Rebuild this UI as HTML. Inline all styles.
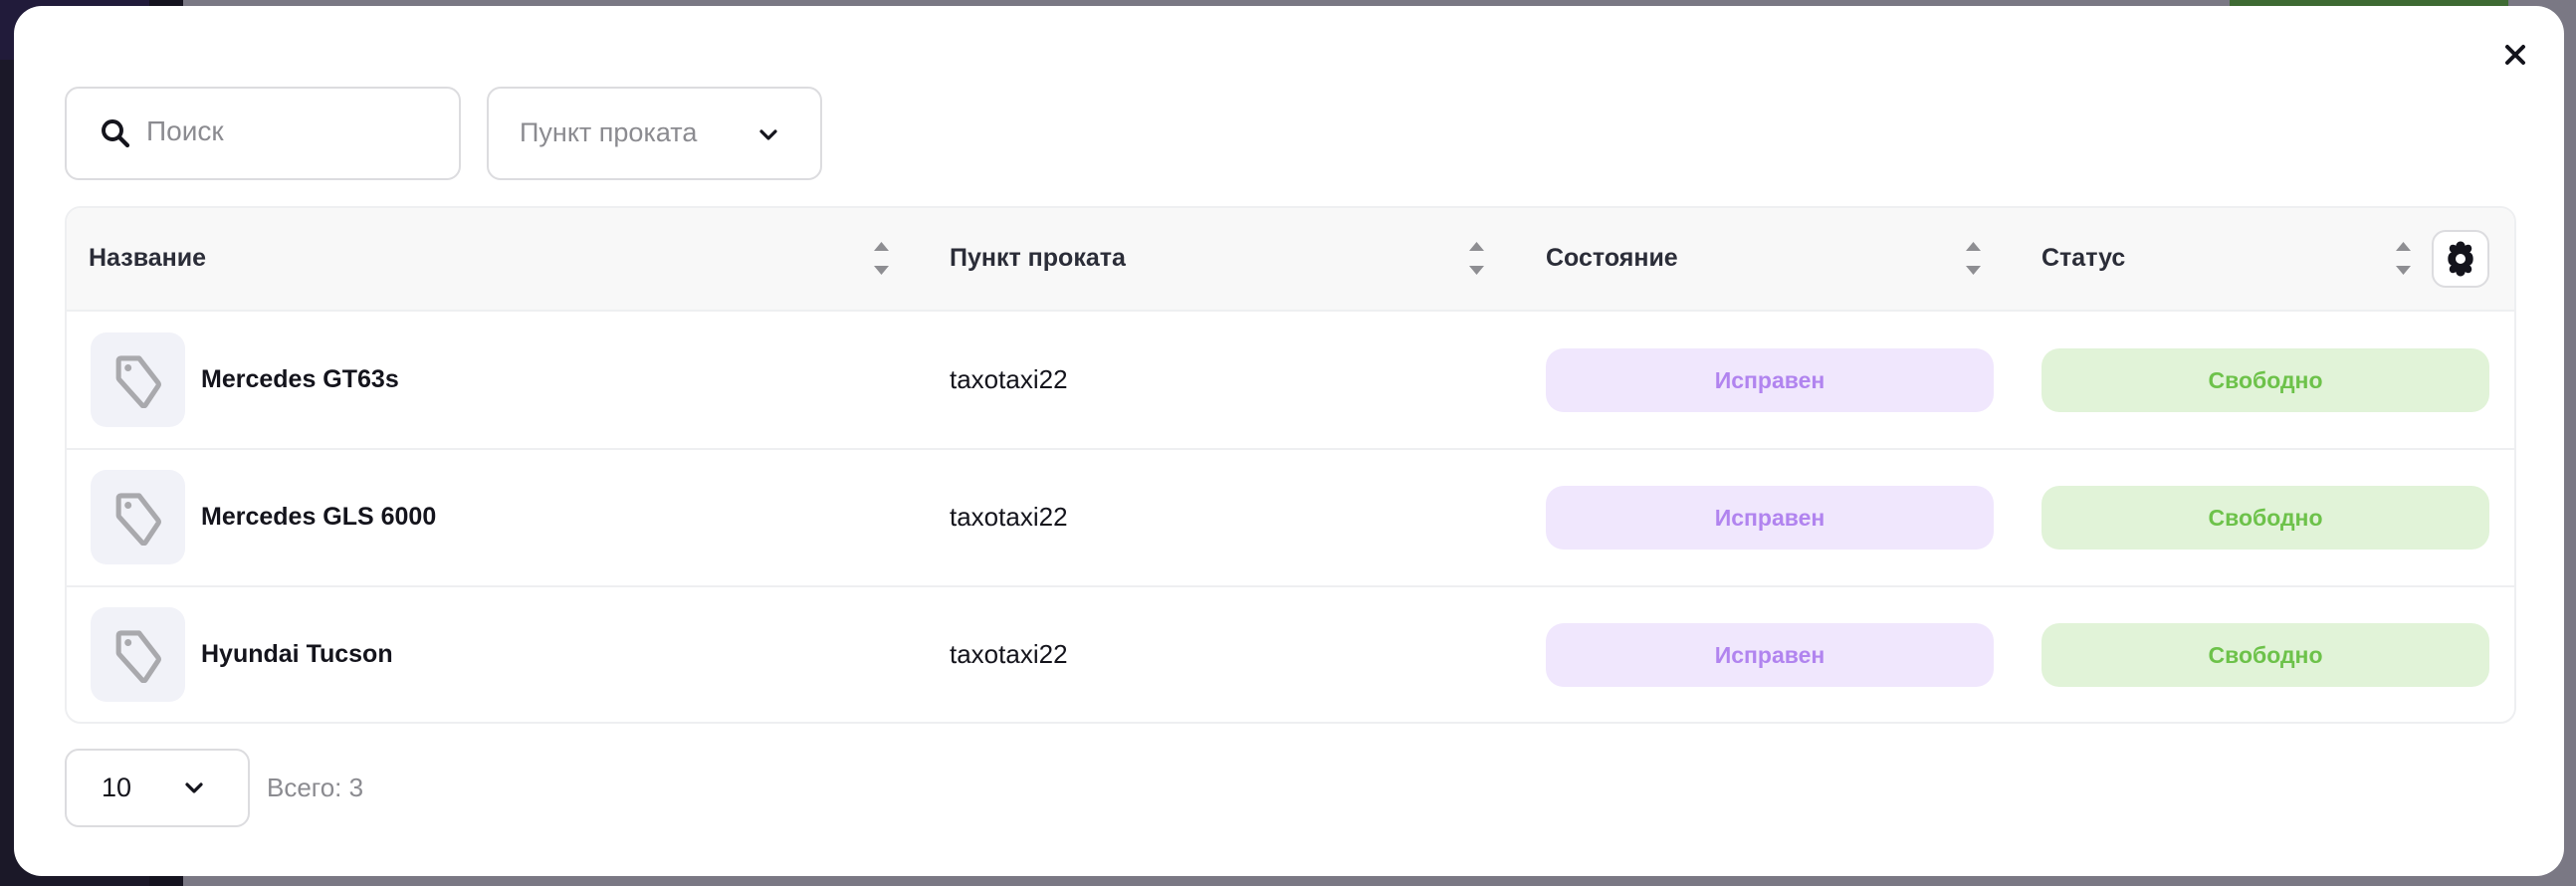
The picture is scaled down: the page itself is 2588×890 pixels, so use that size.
<!DOCTYPE html>
<html><head><meta charset="utf-8"><style>
*{box-sizing:border-box;margin:0;padding:0}
body{width:2588px;height:890px;position:relative;overflow:hidden;background:#7a7884;font-family:"Liberation Sans",sans-serif}
.a{position:absolute}
.modal{left:14px;top:6px;width:2562px;height:874px;background:#fff;border-radius:28px}
.box{border:2px solid #dcdcdf;border-radius:14px;background:#fff}
.hd{font-size:25px;color:#2b2d38;font-weight:bold}
.tx{font-size:26px;color:#14141c}
.nm{font-weight:bold;font-size:25px}
.pill{border-radius:18px;height:64px;display:flex;align-items:center;justify-content:center;font-size:23px;font-weight:bold}
.p1{background:#f0e7fd;color:#b184ef}
.p2{background:#e1f3d8;color:#6dc24a}
.icon{width:95px;height:95px;background:#f1f2f8;border-radius:16px}
.line{height:2px;background:#eeeff1;left:66px;width:2461px}
</style></head><body>
<div class="a" style="left:0;top:0;width:150px;height:890px;background:#1b1828"></div>
<div class="a" style="left:0;top:0;width:150px;height:60px;background:#211b3a"></div>
<div class="a" style="left:150px;top:0;width:34px;height:890px;background:#15131f"></div>
<div class="a" style="left:2240px;top:0;width:280px;height:8px;background:#3e6a33"></div>
<div class="a modal"></div>
<svg class="a" style="left:2515px;top:43px" width="24" height="24" viewBox="0 0 24 24"><path d="M4 4L20 20M20 4L4 20" stroke="#14141c" stroke-width="4" stroke-linecap="round"/></svg>

<div class="a box" style="left:65px;top:87px;width:398px;height:94px"></div>
<svg class="a" style="left:98px;top:116px" width="36" height="36" viewBox="0 0 24 24"><circle cx="10" cy="10" r="6" fill="none" stroke="#14141c" stroke-width="2.6"/><path d="M14.5 14.5L20 20" stroke="#14141c" stroke-width="2.8" stroke-linecap="round"/></svg>
<div class="a" style="left:147px;top:116px;font-size:28px;color:#8b8b90">Поиск</div>

<div class="a box" style="left:489px;top:87px;width:337px;height:94px"></div>
<div class="a" style="left:522px;top:118px;font-size:27px;color:#8b8b90">Пункт проката</div>
<svg class="a" style="left:760px;top:124px" width="24" height="24" viewBox="0 0 24 24"><path d="M5 8L12 15L19 8" fill="none" stroke="#14141c" stroke-width="3.2" stroke-linecap="round" stroke-linejoin="round"/></svg>

<div class="a" style="left:65px;top:207px;width:2463px;height:520px;border:2px solid #eeeff1;border-radius:16px;overflow:hidden">
 <div style="height:104px;background:#f8f8f8;border-bottom:2px solid #eeeff1"></div>
</div>
<div class="a line" style="top:450px"></div>
<div class="a line" style="top:588px"></div>

<div class="a hd" style="left:89px;top:245px">Название</div>
<div class="a hd" style="left:954px;top:245px">Пункт проката</div>
<div class="a hd" style="left:1553px;top:245px">Состояние</div>
<div class="a hd" style="left:2051px;top:245px">Статус</div>

<svg width="0" height="0" style="position:absolute"><defs><g id="s"><path d="M0 9L7.5 0L15 9Z" fill="#8e8e92"/><path d="M0 24L7.5 33L15 24Z" fill="#8e8e92"/></g></defs></svg>
<svg class="a" style="left:878px;top:243px" width="15" height="34"><use href="#s"/></svg>
<svg class="a" style="left:1476px;top:243px" width="15" height="34"><use href="#s"/></svg>
<svg class="a" style="left:1975px;top:243px" width="15" height="34"><use href="#s"/></svg>
<svg class="a" style="left:2407px;top:243px" width="15" height="34"><use href="#s"/></svg>

<div class="a box" style="left:2443px;top:231px;width:58px;height:58px;border-radius:14px"></div>
<svg class="a" style="left:2452px;top:240px" width="40" height="40" viewBox="0 0 24 24"><path fill="#14141c" fill-rule="evenodd" d="M12 1.5c1.6 0 2.6 1.3 2.8 2.6 1.1-.8 2.8-1 3.6.4.8 1.4.1 2.9-.9 3.6 1.2.5 2.1 1.6 2.1 3.9s-.9 3.4-2.1 3.9c1 .7 1.700 2.2.9 3.6-.8 1.4-2.5 1.2-3.6.4-.2 1.3-1.2 2.6-2.8 2.6s-2.6-1.3-2.8-2.6c-1.1.8-2.8 1-3.6-.4-.8-1.4-.1-2.9.9-3.6C5.300 15.4 4.4 14.3 4.4 12s.9-3.4 2.1-3.9c-1-.7-1.7-2.2-.9-3.6.8-1.4 2.5-1.2 3.6-.4.2-1.3 1.2-2.6 2.8-2.6zM12 9a3 3 0 1 0 0 6 3 3 0 0 0 0-6z"/></svg>

<!-- rows -->
<div class="a icon" style="left:91px;top:334px"></div>
<div class="a icon" style="left:91px;top:472px"></div>
<div class="a icon" style="left:91px;top:610px"></div>
<svg width="0" height="0" style="position:absolute"><defs><g id="t"><path d="M4 5c0-1 .5-1.5 1.5-1.5H17l12 15.5c.5.7.5 1.3 0 2L21 33c-.6.8-1.6.8-2.2 0L4.5 17c-.4-.4-.5-.8-.5-1.3z" fill="none" stroke="#a9a9ad" stroke-width="3.2" stroke-linejoin="round"/><circle cx="10" cy="9.5" r="2.2" fill="#a9a9ad"/></g></defs></svg>
<svg class="a" style="left:114px;top:356px" width="50" height="54" viewBox="1 1 31 34"><use href="#t"/></svg>
<svg class="a" style="left:114px;top:494px" width="50" height="54" viewBox="1 1 31 34"><use href="#t"/></svg>
<svg class="a" style="left:114px;top:632px" width="50" height="54" viewBox="1 1 31 34"><use href="#t"/></svg>

<div class="a tx nm" style="left:202px;top:367px">Mercedes GT63s</div>
<div class="a tx nm" style="left:202px;top:505px">Mercedes GLS 6000</div>
<div class="a tx nm" style="left:202px;top:643px">Hyundai Tucson</div>
<div class="a tx" style="left:954px;top:366px">taxotaxi22</div>
<div class="a tx" style="left:954px;top:504px">taxotaxi22</div>
<div class="a tx" style="left:954px;top:642px">taxotaxi22</div>

<div class="a pill p1" style="left:1553px;top:350px;width:450px">Исправен</div>
<div class="a pill p1" style="left:1553px;top:488px;width:450px">Исправен</div>
<div class="a pill p1" style="left:1553px;top:626px;width:450px">Исправен</div>
<div class="a pill p2" style="left:2051px;top:350px;width:450px">Свободно</div>
<div class="a pill p2" style="left:2051px;top:488px;width:450px">Свободно</div>
<div class="a pill p2" style="left:2051px;top:626px;width:450px">Свободно</div>

<div class="a box" style="left:65px;top:752px;width:186px;height:79px"></div>
<div class="a" style="left:102px;top:776px;font-size:27px;color:#14141c">10</div>
<svg class="a" style="left:183px;top:780px" width="24" height="24" viewBox="0 0 24 24"><path d="M5 8L12 15L19 8" fill="none" stroke="#14141c" stroke-width="3.2" stroke-linecap="round" stroke-linejoin="round"/></svg>
<div class="a" style="left:268px;top:776px;font-size:26px;color:#8b8b90">Всего: 3</div>
</body></html>
